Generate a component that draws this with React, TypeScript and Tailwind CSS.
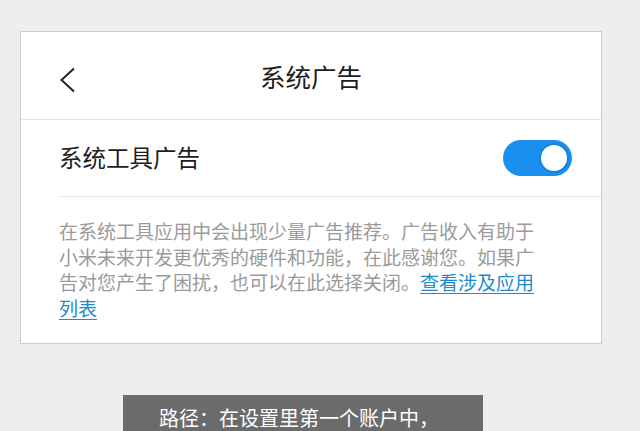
export default function App() {
  return (
    <div
      className="h-[431px] w-[640px] overflow-hidden bg-[#eeeeee]"
      style={{ fontFamily: '"Noto Sans CJK SC", "Noto Sans", sans-serif' }}
    >
      <div className="ml-[20px] mt-[31px] w-[582px] border border-[#cdcdcd] bg-white">
        <div className="relative flex h-[88px] items-center justify-center border-b border-[#e2e2e2]">
          <svg
            className="absolute left-[38px] top-[35px]"
            width="18"
            height="26"
            viewBox="0 0 18 26"
            fill="none"
          >
            <polyline points="15,1.5 2.5,13 15,24.5" stroke="#222" strokeWidth="2" />
          </svg>
          <span className="text-[25.5px] leading-none text-[#1d1d1d]">系统广告</span>
        </div>
        <div className="ml-[38px] flex h-[77px] items-center justify-between border-b border-[#e2e2e2] pr-[29px]">
          <span className="text-[23.5px] leading-none text-[#1d1d1d]">系统工具广告</span>
          <div className="flex h-[36px] w-[69px] items-center justify-end rounded-full bg-[#1a8ff0] pr-[3px]">
            <div className="h-[30px] w-[30px] rounded-full border-[2px] border-[#1683dc] bg-white" />
          </div>
        </div>
        <p className="pb-[23px] pl-[38px] pr-[60px] pt-[21px] text-[19px] leading-[25.5px] text-[#9a9a9a]">
          在系统工具应用中会出现少量广告推荐。广告收入有助于小米未来开发更优秀的硬件和功能，在此感谢您。如果广告对您产生了困扰，也可以在此选择关闭。
          <span className="text-[#1d8ad0] underline underline-offset-[3px]">查看涉及应用列表</span>
        </p>
      </div>
      <div className="ml-[123px] mt-[51px] h-[60px] w-[360px] bg-[#6b6b6b] pl-[36px] pt-[10px]">
        <span className="text-[20px] leading-[26px] text-white">路径：在设置里第一个账户中，</span>
      </div>
    </div>
  );
}
